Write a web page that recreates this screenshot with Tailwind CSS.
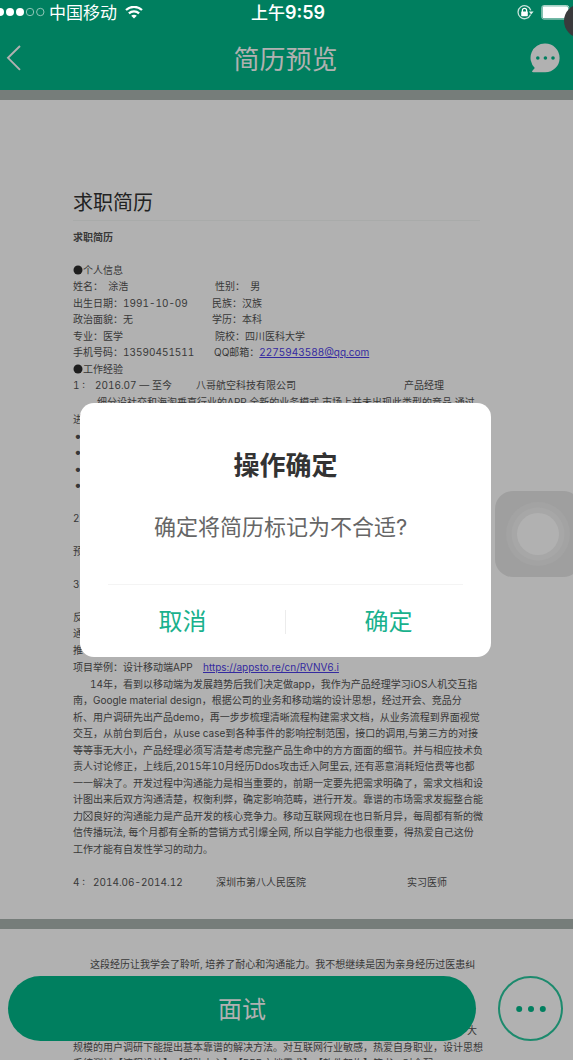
<!DOCTYPE html>
<html lang="zh-CN">
<head>
<meta charset="utf-8">
<meta name="viewport" content="width=device-width, initial-scale=1">
<title>简历预览</title>
<script src="https://cdn.jsdelivr.net/npm/@tailwindcss/browser@4"></script>
</head>
<body class="bg-[#b1b1b1] font-['Inter','Noto_Sans_CJK_SC',sans-serif]">
<div class="relative flex h-screen flex-col overflow-hidden">

  <header class="h-[90px] shrink-0 bg-[#007f5f]">
    <!-- Status bar -->
    <div class="grid h-[26px] grid-cols-[1fr_auto_1fr] items-center text-[17px] leading-6 text-white">
      <div class="flex items-center">
        <svg class="h-3 w-[46px]" viewBox="0 0 46 12" fill="#fff" aria-hidden="true">
          <circle cx="0" cy="5" r="4"/><circle cx="10" cy="5" r="4"/><circle cx="20" cy="5" r="4"/>
          <g fill="none" stroke="#8fc6b7" stroke-width="1"><circle cx="30" cy="5" r="3.7"/><circle cx="40.3" cy="5" r="3.7"/></g>
        </svg>
        <span class="ml-[3px]">中国移动</span>
        <svg class="ml-2 h-[14px] w-[18px]" viewBox="0 0 18 14" fill="none" stroke="#fff" stroke-width="2.2" aria-hidden="true">
          <path d="M1 4C5.4 -0.2 12.6 -0.2 17 4"/><path d="M3.9 7.4C6.8 4.6 11.2 4.6 14.1 7.4"/>
          <path d="M6.2 9.8C7.8 8.3 10.2 8.3 11.8 9.8L9 12.6Z" fill="#fff" stroke="none"/>
        </svg>
      </div>
      <div class="pl-[3px] font-medium"><span>上午</span><span class="text-[18px] font-semibold">9:59</span></div>
      <div class="flex items-center justify-end">
        <svg class="h-4 w-[18px]" viewBox="0 0 18 16" aria-hidden="true">
          <path d="M13.6 9.6A6.5 6.5 0 1 1 13.8 5.4" fill="none" stroke="#c5e2da" stroke-width="1.3"/>
          <path d="M11.8 6.4H16.6L14.2 9.4Z" fill="#e6f3ef"/>
          <path d="M5.4 7.2V5.4a2.1 2.1 0 0 1 4.2 0V7.2" fill="none" stroke="#fff" stroke-width="1.3"/>
          <rect x="4.2" y="6.4" width="6.6" height="4.8" rx=".6" fill="#fff"/>
        </svg>
        <svg class="ml-[6px] h-4 w-8" viewBox="0 0 32 16" aria-hidden="true">
          <rect x=".8" y=".5" width="27" height="13.6" rx="2" fill="none" stroke="#a8d2c6"/>
          <rect x="1.6" y="1.2" width="25.4" height="12" rx="1.2" fill="#fff"/>
        </svg>
      </div>
    </div>
    <!-- Navigation -->
    <nav class="grid h-16 grid-cols-[1fr_auto_1fr] items-center pr-[13px] pl-[6px]">
      <button type="button" aria-label="返回" class="w-fit">
        <svg class="h-[26px] w-4" viewBox="0 0 16 26" fill="none" stroke="#b1b1b1" stroke-width="1.9"><path d="M14 1L2 12.8L14 24.8"/></svg>
      </button>
      <h1 class="pt-[3px] pl-[5px] text-[26px] leading-9 text-[#b1b1b1]">简历预览</h1>
      <button type="button" aria-label="消息" class="w-fit justify-self-end">
        <svg class="h-[30px] w-[30px]" viewBox="0 0 30 30">
          <path d="M15.2 .5a14.3 14.3 0 1 1 0 28.8H3.4Q1.6 29.2 2.2 28L4.8 25A14.3 14.3 0 0 1 15.2 .5Z" fill="#b1b1b1"/>
          <g fill="#007f5f"><circle cx="7.8" cy="15" r="1.8"/><circle cx="15.4" cy="15" r="1.8"/><circle cx="23" cy="15" r="1.8"/></g>
        </svg>
      </button>
    </nav>
  </header>

  <!-- Résumé document -->
  <main class="shrink-0 text-[10px] whitespace-nowrap text-[#383838] tabular-nums">
    <div class="h-[10px] bg-[#767d7a]"></div>
    <article class="h-[819px] pt-[87px] pr-[93px] pl-[73px]">
      <h2 class="border-b border-[#a9abaa] pb-px text-[20px] leading-8 text-[#222]">求职简历</h2>
      <p class="mt-2 leading-4 font-bold">求职简历</p>

      <section class="mt-[17px] leading-[16px] [&>*:nth-child(even)]:leading-[17px]">
        <p class="flex items-center"><svg class="h-[10px] w-[10px]" viewBox="0 0 10 10" fill="#1e1e1e"><circle cx="5" cy="5" r="4.5"/></svg>个人信息</p>
        <p class="flex"><span class="w-[142px]">姓名：&nbsp; 涂浩</span><span>性别：&nbsp; 男</span></p>
        <p class="flex"><span class="w-[139px]">出生日期：1991-10-09</span><span>民族：汉族</span></p>
        <p class="flex"><span class="w-[139px]">政治面貌：无</span><span>学历：本科</span></p>
        <p class="flex"><span class="w-[142px]">专业：医学</span><span>院校：四川医科大学</span></p>
        <p class="flex"><span class="w-[141px]">手机号码：13590451511</span><span>QQ邮箱：<a href="mailto:2275943588@qq.com" class="text-[#342aa0] underline">2275943588@qq.com</a></span></p>
        <p class="flex items-center"><svg class="h-[10px] w-[10px]" viewBox="0 0 10 10" fill="#1e1e1e"><circle cx="5" cy="5" r="4.5"/></svg>工作经验</p>
        <p class="flex"><span class="w-[22px]">1 :</span><span class="w-[101px]">2016.07 — 至今</span><span class="w-[208px]">八哥航空科技有限公司</span><span>产品经理</span></p>
      </section>

      <section class="leading-[17px] [&>*:nth-child(even)]:leading-[16px]">
        <p class="pl-6">细分设社交和海淘垂直行业的APP,全新的业务模式,市场上并未出现此类型的竞品,通过</p>
        <p>进</p>
        <p class="pl-px text-[14px]">•</p>
        <p class="pl-px text-[14px]">•</p>
        <p class="pl-px text-[14px]">•</p>
        <p class="pl-px text-[14px]">•</p>
        <p>&nbsp;</p>
        <p>2</p>
        <p>&nbsp;</p>
        <p>预</p>
        <p>&nbsp;</p>
        <p>3</p>
        <p>&nbsp;</p>
        <p>反</p>
        <p>通</p>
        <p>推</p>
      </section>

      <section class="mt-px leading-[17px] [&>*:nth-child(even)]:leading-[16px]">
        <p class="flex"><span class="w-[130px]">项目举例：设计移动端APP</span><a href="https://appsto.re/cn/RVNV6.i" class="text-[#342aa0] underline">https://appsto.re/cn/RVNV6.i</a></p>
        <p class="pl-[17px]">14年，看到以移动端为发展趋势后我们决定做app，我作为产品经理学习iOS人机交互指</p>
        <p>南，Google material design，根据公司的业务和移动端的设计思想，经过开会、竞品分</p>
        <p>析、用户调研先出产品demo，再一步步梳理清晰流程构建需求文档，从业务流程到界面视觉</p>
        <p>交互，从前台到后台，从use case到各种事件的影响控制范围，接口的调用,与第三方的对接</p>
        <p>等等事无大小，产品经理必须写清楚考虑完整产品生命中的方方面面的细节。并与相应技术负</p>
        <p>责人讨论修正，上线后,2015年10月经历Ddos攻击迁入阿里云, 还有恶意消耗短信费等也都</p>
        <p>一一解决了。开发过程中沟通能力是相当重要的，前期一定要先把需求明确了，需求文档和设</p>
        <p>计图出来后双方沟通清楚，权衡利弊，确定影响范畴，进行开发。靠谱的市场需求发掘整合能</p>
        <p>力<svg class="inline-block h-[10px] w-[10px] align-[-1px]" viewBox="0 0 10 10" fill="none" stroke="#383838" stroke-width=".8"><path d="M1 .8H9V9.2H1ZM1 .8L9 9.2M9 .8L1 9.2"/></svg>良好的沟通能力是产品开发的核心竞争力。移动互联网现在也日新月异，每周都有新的微</p>
        <p>信传播玩法, 每个月都有全新的营销方式引爆全网, 所以自学能力也很重要，得热爱自己这份</p>
        <p>工作才能有自发性学习的动力。</p>
        <p>&nbsp;</p>
        <p class="flex"><span class="w-5">4 :</span><span class="w-[123px]">2014.06-2014.12</span><span class="w-[191px]">深圳市第八人民医院</span><span>实习医师</span></p>
      </section>
    </article>

    <div class="h-[10px] bg-[#767d7a]"></div>
    <article class="pt-[27px] pr-[93px] pl-[73px] leading-[17px] [&>*:nth-child(even)]:leading-[16px]">
      <p class="pl-[17px]">这段经历让我学会了聆听, 培养了耐心和沟通能力。我不想继续是因为亲身经历过医患纠</p>
      <p>&nbsp;</p>
      <p>&nbsp;</p>
      <p>&nbsp;</p>
      <p class="pr-[3px] text-right">大</p>
      <p>规模的用户调研下能提出基本靠谱的解决方法。对互联网行业敏感，热爱自身职业，设计思想</p>
      <p>系统测试【流程设计】、【帮助中心】、【PRD文档需求】、【软件架构】等书，对全配</p>
    </article>
  </main>

  <!-- Action bar over the document -->
  <div class="absolute inset-x-0 bottom-[19px] flex gap-[22px] pr-[10px] pl-2">
    <button type="button" class="h-[65px] flex-1 rounded-full bg-[#007f5f] pt-[2px] text-[24px] text-[#b1b1b1]">面试</button>
    <button type="button" aria-label="更多" class="flex size-[65px] items-center justify-center rounded-full border-2 border-[#1c8a6d]">
      <svg class="h-[6px] w-[30px]" viewBox="0 0 30 6" fill="#007f5f"><circle cx="3.2" cy="3" r="3"/><circle cx="15" cy="3" r="3"/><circle cx="26.8" cy="3" r="3"/></svg>
    </button>
  </div>

  <!-- Floating assistive button -->
  <button type="button" aria-label="辅助触控" class="absolute top-[491px] -right-2 flex size-[86px] items-center justify-center rounded-[18px] bg-[#9f9f9f]">
    <svg class="size-16" viewBox="0 0 64 64"><circle cx="32" cy="32" r="32" fill="#a3a3a3"/><circle cx="32" cy="32" r="26.5" fill="#a7a7a7"/><circle cx="32" cy="32" r="21" fill="#b1b1b1"/></svg>
  </button>
  <div class="absolute top-1 -right-[25px] size-[34px] rounded-full bg-[#3a3a3c]"></div>

  <!-- Confirmation dialog -->
  <div role="dialog" aria-modal="true" aria-labelledby="dialog-title" class="absolute top-[403px] right-[82px] left-20 rounded-[14px] bg-white text-center">
    <h2 id="dialog-title" class="pt-[45px] text-[26px] leading-9 font-bold text-[#333]">操作确定</h2>
    <p class="mt-[27px] pr-[10px] text-[22px] leading-8 text-[#666]">确定将简历标记为不合适?</p>
    <div class="mx-7 mt-[41px] border-t border-[#f4f4f4]"></div>
    <div class="flex items-center pt-[19px] pb-[17px] text-[24px] leading-9 text-[#19b18d]">
      <button type="button" class="flex-1">取消</button>
      <div class="h-6 w-px bg-[#ececec]"></div>
      <button type="button" class="flex-1">确定</button>
    </div>
  </div>
</div>
</body>
</html>
